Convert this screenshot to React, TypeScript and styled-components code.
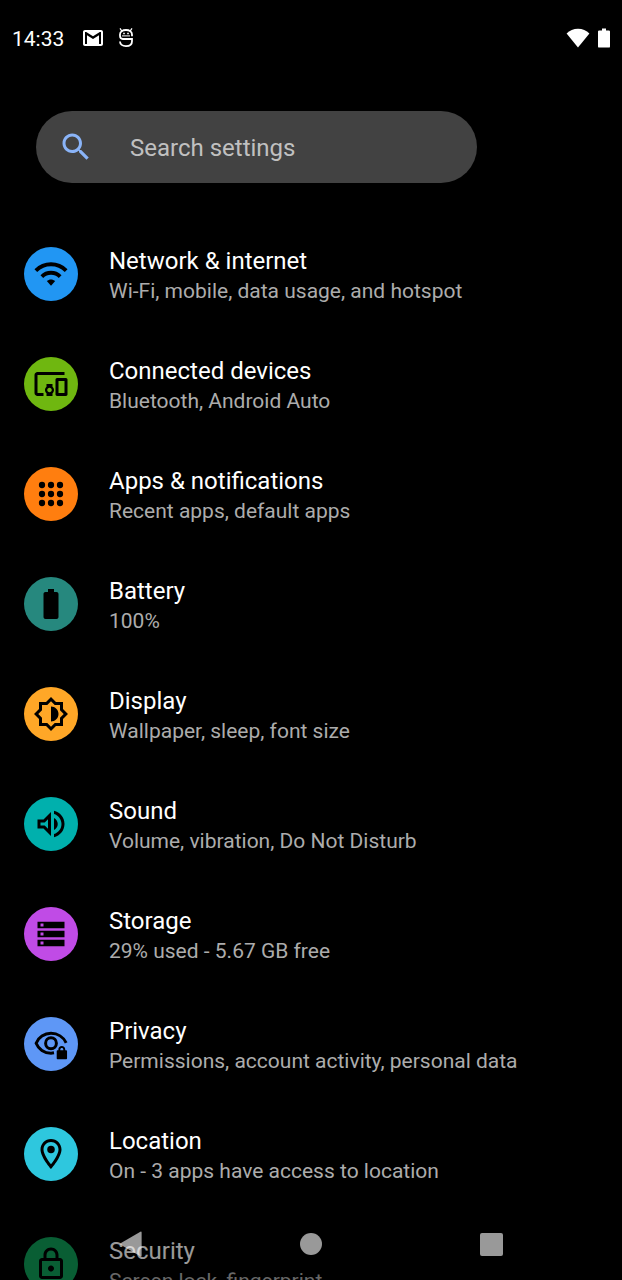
import React from 'react';
import styled, { createGlobalStyle } from 'styled-components';

const GlobalStyle = createGlobalStyle`
  * { box-sizing: border-box; }
  body {
    margin: 0;
    background: #000;
    color: #fff;
    font-family: Roboto, 'Liberation Sans', sans-serif;
    overflow: hidden;
  }
`;

const Screen = styled.div`
  height: 100vh;
  overflow: hidden;
  background: #000;
`;

const StatusBar = styled.header`
  display: flex;
  align-items: center;
  justify-content: space-between;
  height: 75px;
  padding: 0 12px;
`;

const StatusGroup = styled.div<{ $gap: number }>`
  display: flex;
  align-items: center;
  gap: ${(p) => p.$gap}px;
`;

const Clock = styled.time`
  font-size: 21px;
  line-height: 24px;
  padding-top: 2px;
  margin-right: 3px;
`;

const SearchBar = styled.label`
  display: flex;
  align-items: center;
  gap: 36px;
  height: 72px;
  margin: 36px 145px 36px 36px;
  padding: 0 22px;
  border-radius: 36px;
  background: #424242;
`;

const SearchInput = styled.input`
  flex: 1;
  min-width: 0;
  padding: 2px 0 0;
  border: 0;
  outline: 0;
  background: transparent;
  color: #fff;
  font: inherit;
  font-size: 24px;
  line-height: 30px;
  &::placeholder {
    color: #c0c0c0;
    opacity: 1;
  }
`;

const Row = styled.a`
  display: flex;
  align-items: flex-start;
  gap: 31px;
  height: 110px;
  padding: 28px 24px 0;
  color: inherit;
  text-decoration: none;
`;

const Badge = styled.span<{ $color: string }>`
  display: flex;
  flex: none;
  align-items: center;
  justify-content: center;
  width: 54px;
  height: 54px;
  border-radius: 50%;
  background: ${(p) => p.$color};
  color: #000;
`;

const RowText = styled.span`
  display: flex;
  flex-direction: column;
  min-width: 0;
  line-height: 30px;
  white-space: nowrap;
  margin-top: -1px;
`;

const Title = styled.span`
  font-size: 24px;
`;

const Summary = styled.span`
  font-size: 21px;
  color: #acacac;
`;

const NavBar = styled.nav`
  position: fixed;
  left: 0;
  right: 0;
  bottom: 0;
  display: grid;
  grid-template-columns: repeat(3, 1fr);
  height: 72px;
  padding: 0 41px;
  background: rgba(0, 0, 0, 0.4);
`;

const NavButton = styled.button`
  display: flex;
  align-items: center;
  justify-content: center;
  padding: 0;
  border: 0;
  background: transparent;
  color: rgba(255, 255, 255, 0.6);
`;

const Glyph = ({ size = 36, children }: { size?: number; children: React.ReactNode }) => (
  <svg width={size} height={size} viewBox="0 0 24 24" fill="currentColor" aria-hidden="true">
    {children}
  </svg>
);

const WifiGlyph = () => (
  <g>
    <g fill="none" stroke="currentColor" strokeWidth="2.6">
      <path d="M1.9 9.7C7.5 4.1 16.5 4.1 22.1 9.7" />
      <path d="M5.9 13.7c3.4-3.4 8.8-3.4 12.2 0" />
    </g>
    <path d="M9.2 16.7c1.7-1.4 3.9-1.4 5.6 0L12 19.9z" />
  </g>
);

const DevicesGlyph = () => (
  <path d="M3 6h18V4H3c-1.1 0-2 .9-2 2v12c0 1.1.9 2 2 2h4v-2H3V6zm10 6H9v1.78c-.61.55-1 1.33-1 2.22s.39 1.67 1 2.22V20h4v-1.78c.61-.55 1-1.34 1-2.22s-.39-1.67-1-2.22V12zm-2 5.5c-.83 0-1.5-.67-1.5-1.5s.67-1.5 1.5-1.5 1.5.67 1.5 1.5-.67 1.5-1.5 1.5zM22 8h-6c-.5 0-1 .5-1 1v10c0 .5.5 1 1 1h6c.5 0 1-.5 1-1V9c0-.5-.5-1-1-1zm-1 10h-4v-8h4v8z" />
);

const AppsGlyph = () => (
  <g>
    {[6, 12, 18].map((y) => [6, 12, 18].map((x) => <circle key={`${x}-${y}`} cx={x} cy={y} r="2.1" />))}
  </g>
);

const BatteryGlyph = () => (
  <path d="M15.67 4H14V2h-4v2H8.33C7.6 4 7 4.6 7 5.33v15.33C7 21.4 7.6 22 8.33 22h7.33c.74 0 1.34-.6 1.34-1.33V5.33C17 4.6 16.4 4 15.67 4z" />
);

const DisplayGlyph = () => (
  <path d="M20 8.69V4h-4.69L12 .69 8.69 4H4v4.69L.69 12 4 15.31V20h4.69L12 23.31 15.31 20H20v-4.69L23.31 12 20 8.69zm-2 5.79V18h-3.52L12 20.48 9.52 18H6v-3.52L3.52 12 6 9.52V6h3.52L12 3.52 14.48 6H18v3.52L20.48 12 18 14.48zM12 17V7c2.76 0 5 2.24 5 5s-2.24 5-5 5z" />
);

const SoundGlyph = () => (
  <path d="M3 9v6h4l5 5V4L7 9H3zm7-.17v6.34L7.83 13H5v-2h2.83L10 8.83zM16.5 12c0-1.77-1.02-3.29-2.5-4.03v8.05c1.48-.73 2.5-2.25 2.5-4.02zM14 3.23v2.06c2.89.86 5 3.54 5 6.71s-2.11 5.85-5 6.71v2.06c4.01-.91 7-4.49 7-8.77s-2.99-7.86-7-8.77z" />
);

const StorageGlyph = () => (
  <path
    fillRule="evenodd"
    d="M3 3.8h18v4.4H3zM5 5v2h2V5zM3 9.8h18v4.4H3zM5 11v2h2v-2zM3 15.8h18v4.4H3zM5 17v2h2v-2z"
  />
);

const PrivacyGlyph = () => (
  <g>
    <g fill="none" stroke="currentColor" strokeWidth="2">
      <path d="M22.1 11.2C20.3 7.4 16.4 4.9 12 4.9S3.6 7.6 2.1 11.5C3.6 15.4 7.5 18.1 12 18.1c.7 0 1.4-.1 2-.2" />
      <circle cx="12" cy="11.5" r="3.6" />
    </g>
    <path
      fillRule="evenodd"
      d="M22 16.2h-.5v-.5c0-1.3-1-2.3-2.3-2.3s-2.3 1-2.3 2.3v.5h-.4c-.4 0-.7.3-.7.7v4.6c0 .4.3.7.7.7H22c.4 0 .7-.3.7-.7v-4.6c0-.4-.3-.7-.7-.7zm-3.8 0v-.5c0-.6.4-1 1-1s1 .4 1 1v.5z"
    />
  </g>
);

const LocationGlyph = () => (
  <g>
    <path d="M12 2C8.13 2 5 5.13 5 9c0 5.25 7 13 7 13s7-7.75 7-13c0-3.87-3.13-7-7-7zM7 9c0-2.76 2.24-5 5-5s5 2.24 5 5c0 2.88-2.88 7.19-5 9.88C9.92 16.21 7 11.85 7 9z" />
    <circle cx="12" cy="9" r="2.5" />
  </g>
);

const LockGlyph = () => (
  <path d="M18 8h-1V6c0-2.76-2.24-5-5-5S7 3.24 7 6v2H6c-1.1 0-2 .9-2 2v10c0 1.1.9 2 2 2h12c1.1 0 2-.9 2-2V10c0-1.1-.9-2-2-2zM9 6c0-1.66 1.34-3 3-3s3 1.34 3 3v2H9V6zm9 14H6V10h12v10zm-6-3c1.1 0 2-.9 2-2s-.9-2-2-2-2 .9-2 2 .9 2 2 2z" />
);

const settings = [
  { title: 'Network & internet', summary: 'Wi-Fi, mobile, data usage, and hotspot', color: '#2196f3', Icon: WifiGlyph },
  { title: 'Connected devices', summary: 'Bluetooth, Android Auto', color: '#6fb710', Icon: DevicesGlyph },
  { title: 'Apps & notifications', summary: 'Recent apps, default apps', color: '#ff7e0f', Icon: AppsGlyph },
  { title: 'Battery', summary: '100%', color: '#26887e', Icon: BatteryGlyph },
  { title: 'Display', summary: 'Wallpaper, sleep, font size', color: '#ffa727', Icon: DisplayGlyph },
  { title: 'Sound', summary: 'Volume, vibration, Do Not Disturb', color: '#00b0ad', Icon: SoundGlyph },
  { title: 'Storage', summary: '29% used - 5.67 GB free', color: '#c04be6', Icon: StorageGlyph },
  { title: 'Privacy', summary: 'Permissions, account activity, personal data', color: '#5e97f6', Icon: PrivacyGlyph },
  { title: 'Location', summary: 'On - 3 apps have access to location', color: '#2ec7de', Icon: LocationGlyph },
  { title: 'Security', summary: 'Screen lock, fingerprint', color: '#0f9d58', Icon: LockGlyph },
];

export default function App() {
  return (
    <Screen>
      <GlobalStyle />
      <StatusBar>
        <StatusGroup $gap={14}>
          <Clock>14:33</Clock>
          <Glyph size={24}>
            <path d="M20 4H4c-1.1 0-2 .9-2 2v12c0 1.1.9 2 2 2h16c1.1 0 2-.9 2-2V6c0-1.1-.9-2-2-2zm0 14h-2V9.25L12 13 6 9.25V18H4V6h1.2l6.8 4.25L18.8 6H20v12z" />
          </Glyph>
          <svg width="14" height="19" viewBox="0 0 14 19" fill="none" stroke="#fff" strokeWidth="1.8" aria-hidden="true">
            <path d="M13 8.2V6.4C13 3.6 10.4 2 7 2S1 3.6 1 6.4v1.4C1 9.7 2 11 3.8 11H13v2.2c0 3-2.4 4.9-6 4.9s-6-1.9-6-4.6" />
            <path d="M1 .4L2.8 3M13 .4L11.2 3" strokeWidth="1.3" />
            <path d="M3 7.9h8" strokeWidth="1" />
            <path d="M4.2 5.5h1.6M8.2 5.5h1.6" strokeWidth="1.6" />
          </svg>
        </StatusGroup>
        <StatusGroup $gap={8}>
          <svg width="24" height="20" viewBox="0 0 24 20" fill="#fff" aria-hidden="true">
            <path d="M12 19.6L.6 5.4C3.6 2.4 7.5.7 12 .7s8.4 1.7 11.4 4.7z" />
          </svg>
          <svg width="12" height="20" viewBox="0 0 12 20" fill="#fff" aria-hidden="true">
            <path d="M4 .4h4v2h2.8Q12 2.4 12 3.6v14.8q0 1.2-1.2 1.2H1.2Q0 19.6 0 18.4V3.6q0-1.2 1.2-1.2H4z" />
          </svg>
        </StatusGroup>
      </StatusBar>
      <SearchBar>
        <svg width="36" height="36" viewBox="0 0 24 24" fill="#8ab4f8" aria-hidden="true">
          <path d="M15.5 14h-.79l-.28-.27C15.41 12.59 16 11.11 16 9.5 16 5.91 13.09 3 9.5 3S3 5.91 3 9.5 5.91 16 9.5 16c1.61 0 3.09-.59 4.23-1.57l.27.28v.79l5 4.99L20.49 19l-4.99-5zm-6 0C7.01 14 5 11.99 5 9.5S7.01 5 9.5 5 14 7.01 14 9.5 11.99 14 9.5 14z" />
        </svg>
        <SearchInput type="text" placeholder="Search settings" aria-label="Search settings" />
      </SearchBar>
      <main>
        {settings.map(({ title, summary, color, Icon }) => (
          <Row key={title} href="#">
            <Badge $color={color}>
              <Glyph>
                <Icon />
              </Glyph>
            </Badge>
            <RowText>
              <Title>{title}</Title>
              <Summary>{summary}</Summary>
            </RowText>
          </Row>
        ))}
      </main>
      <NavBar>
        <NavButton aria-label="Back">
          <svg width="22" height="26" viewBox="0 0 22 26" fill="currentColor" aria-hidden="true">
            <path d="M20.4.8q1.2-.6 1.2.8v22.8q0 1.4-1.2.8L.6 13.8q-1-.8 0-1.6z" />
          </svg>
        </NavButton>
        <NavButton aria-label="Home">
          <svg width="22" height="22" viewBox="0 0 22 22" fill="currentColor" aria-hidden="true">
            <circle cx="11" cy="11" r="11" />
          </svg>
        </NavButton>
        <NavButton aria-label="Recent apps">
          <svg width="23" height="23" viewBox="0 0 23 23" fill="currentColor" aria-hidden="true">
            <rect width="23" height="23" rx="2" />
          </svg>
        </NavButton>
      </NavBar>
    </Screen>
  );
}
